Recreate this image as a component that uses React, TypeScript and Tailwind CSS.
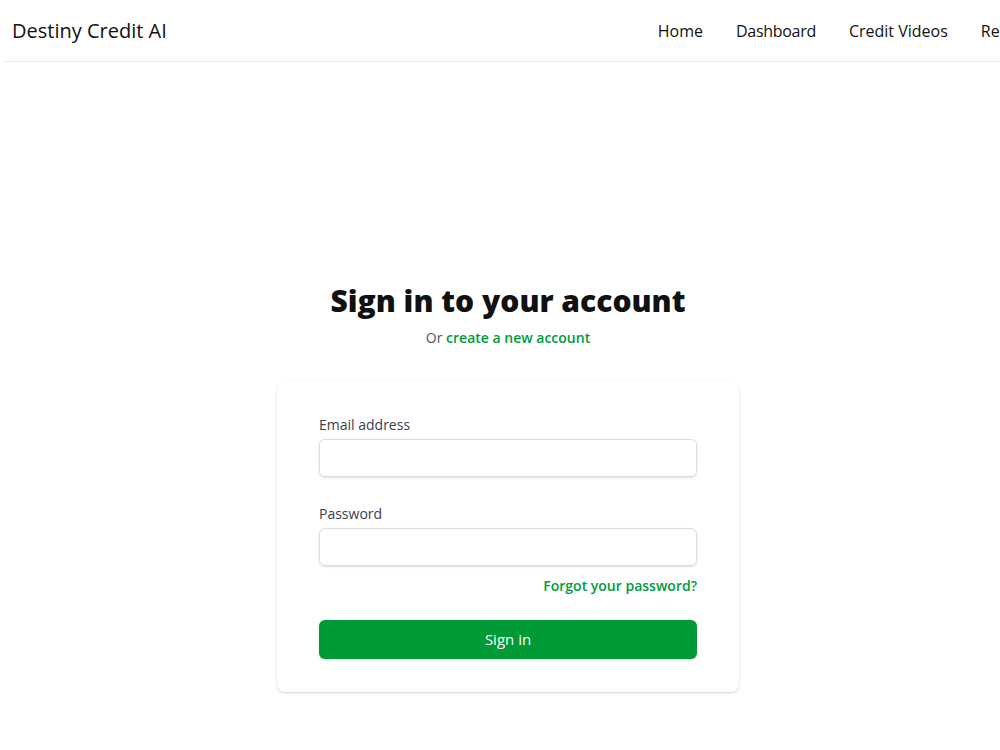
export default function App() {
  return (
    <div className="min-h-screen w-full overflow-hidden bg-white text-[#111] font-['Open_Sans',sans-serif]">
      <header className="ml-1 flex h-[62px] w-[1100px] items-center border-b border-[#ebebeb] pl-2">
        <h1 className="text-[20px] font-normal">Destiny Credit AI</h1>
        <nav className="ml-[491px] flex items-center gap-[33px] text-[16px]">
          <a href="#">Home</a>
          <a href="#" className="tracking-[-0.3px]">Dashboard</a>
          <a href="#">Credit Videos</a>
          <a href="#">Resources</a>
        </nav>
      </header>

      <main className="flex flex-col items-center pl-4 pt-[221px]">
        <h2 className="text-[30px] font-extrabold leading-9 text-[#111]">Sign in to your account</h2>
        <p className="mt-[9px] text-[14px] leading-5 text-[#4b5563]">
          Or <a href="#" className="font-semibold text-[#009b3a]">create a new account</a>
        </p>

        <div className="mt-[33px] w-[462px] rounded-lg bg-white px-[42px] pb-[33px] pt-[34px] shadow-[0_1px_3px_rgba(0,0,0,0.12),0_1px_2px_rgba(0,0,0,0.06)]">
          <form>
            <label className="block text-[14px] font-medium leading-5 text-[#374151]">Email address</label>
            <input type="email" className="mt-1 block h-[38px] w-full rounded-md border border-[#d9dce1] shadow-sm outline-none" />

            <label className="mt-[27px] block text-[14px] font-medium leading-5 text-[#374151]">Password</label>
            <input type="password" className="mt-1 block h-[38px] w-full rounded-md border border-[#d9dce1] shadow-sm outline-none" />

            <div className="mt-[10px] flex justify-end">
              <a href="#" className="text-[14px] font-semibold leading-5 text-[#009b3a]">Forgot your password?</a>
            </div>

            <button type="button" className="mt-6 flex h-[39px] w-full items-center justify-center rounded-md bg-[#009b37] text-[15px] font-medium text-white shadow-sm">
              Sign in
            </button>
          </form>
        </div>
      </main>
    </div>
  );
}
